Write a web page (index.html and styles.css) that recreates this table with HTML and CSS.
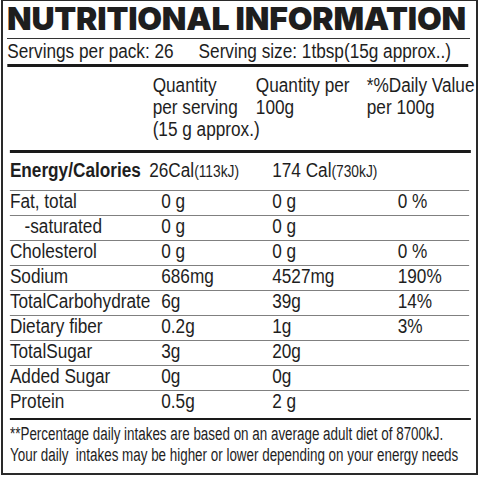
FILE: index.html
```html
<!DOCTYPE html>
<html lang="en">
<head>
    <meta charset="UTF-8">
    <meta name="viewport" content="width=device-width, initial-scale=1.0">
    <title>Nutritional Information</title>
    <link rel="stylesheet" href="styles.css">
</head>
<body>
    <div class="panel">
        <h1 class="title">NUTRITIONAL INFORMATION</h1>
        <!-- narrow text: Liberation Sans squeezed to a condensed width -->
        <div class="narrow">
            <div class="servings">
                <span>Servings per pack: 26</span>
                <span class="size">Serving size: 1tbsp(15g approx..)</span>
            </div>
            <div class="head">
                <div></div>
                <div>Quantity<br>per serving<br>(15 g approx.)</div>
                <div>Quantity per<br>100g</div>
                <div>*%Daily Value<br>per 100g</div>
            </div>
            <div class="row energy">
                <div class="name">Energy/Calories</div>
                <div>26Cal<small>(113kJ)</small></div>
                <div>174 Cal<small>(730kJ)</small></div>
            </div>
            <div class="row">
                <div class="name">Fat, total</div>
                <div>0 g</div>
                <div>0 g</div>
                <div>0 %</div>
            </div>
            <div class="row">
                <div class="name sub">-saturated</div>
                <div>0 g</div>
                <div>0 g</div>
                <div></div>
            </div>
            <div class="row">
                <div class="name">Cholesterol</div>
                <div>0 g</div>
                <div>0 g</div>
                <div>0 %</div>
            </div>
            <div class="row">
                <div class="name">Sodium</div>
                <div>686mg</div>
                <div>4527mg</div>
                <div>190%</div>
            </div>
            <div class="row">
                <div class="name">TotalCarbohydrate</div>
                <div>6g</div>
                <div>39g</div>
                <div>14%</div>
            </div>
            <div class="row">
                <div class="name">Dietary fiber</div>
                <div>0.2g</div>
                <div>1g</div>
                <div>3%</div>
            </div>
            <div class="row">
                <div class="name">TotalSugar</div>
                <div>3g</div>
                <div>20g</div>
                <div></div>
            </div>
            <div class="row">
                <div class="name">Added Sugar</div>
                <div>0g</div>
                <div>0g</div>
                <div></div>
            </div>
            <div class="row last">
                <div class="name">Protein</div>
                <div>0.5g</div>
                <div>2 g</div>
                <div></div>
            </div>
        </div>
        <p class="note">**Percentage daily intakes are based on an average adult diet of 8700kJ.<br>Your daily&nbsp; intakes may be higher or lower depending on your energy needs</p>
    </div>
</body>
</html>
```

FILE: styles.css
```css
body {
    margin: 0;
    background: #fff;
    color: #1e1e1e;
    font-family: "Liberation Sans", Arial, sans-serif;
}

.panel {
    box-sizing: border-box;
    width: 477px;
    height: 475px;
    margin-left: 1px;
    border: 2px solid #2a2a2a;
    border-top-width: 1px;
}

.title {
    margin: 0 6px 0 4px;
    font-family: Inter, "Noto Sans", sans-serif;
    font-weight: 900;
    font-size: 32px;
    line-height: 36px;
    height: 37px;
    letter-spacing: -0.2px;
    border-bottom: 1px solid #333;
    white-space: nowrap;
}

/* everything in here is drawn at 86% width */
.narrow {
    width: 550px;
    transform: scaleX(0.86);
    transform-origin: 0 0;
    font-size: 20px;
}

.servings {
    display: flex;
    line-height: 25px;
    height: 25px;
    margin: 0 9px 0 5px;
    border-bottom: 3px solid #1a1a1a;
    white-space: nowrap;
}

.servings .size {
    margin-left: 29px;
}

.head {
    display: grid;
    grid-template-columns: 166px 120px 129px 1fr;
    line-height: 22px;
    height: 76px;
    padding-top: 7px;
    margin: 0 6px 0 8px;
    border-bottom: 3px solid #1a1a1a;
    white-space: nowrap;
}

.row {
    display: grid;
    grid-template-columns: 176px 129px 146px 1fr;
    line-height: 20px;
    height: 24px;
    margin: 0 8px;
    border-bottom: 1px solid #808080;
    white-space: nowrap;
}

.row.energy {
    grid-template-columns: 162px 143px 1fr;
    height: 30px;
    padding-top: 7px;
}

.row.energy .name {
    font-weight: bold;
}

.row small {
    font-size: 16px;
}

.row.last {
    height: 27px;
    border-bottom: 2px solid #1a1a1a;
    margin-right: 6px;
}

.sub {
    padding-left: 17px;
}

.note {
    width: 600px;
    margin: 4px 0 0 7px;
    font-size: 18px;
    line-height: 21px;
    white-space: nowrap;
    transform: scaleX(0.745);
    transform-origin: 0 0;
}
```
